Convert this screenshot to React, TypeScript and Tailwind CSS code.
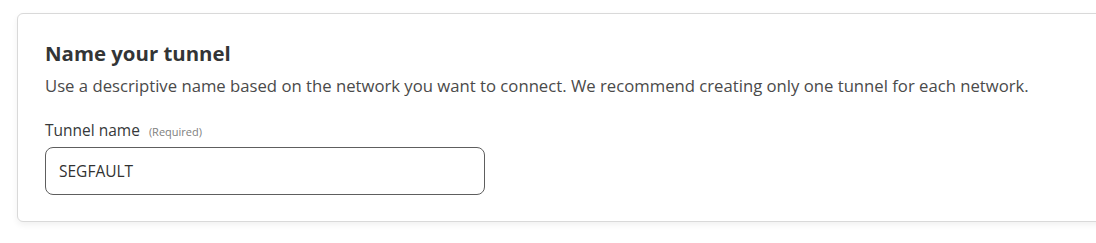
import React from "react";

const App: React.FC = () => {
  return (
    <div className="min-h-[243px] bg-white pt-[13px] pl-[17px] font-['Open_Sans',sans-serif] overflow-hidden">
      <div className="w-[1100px] rounded-[6px] border border-[#d9d9d9] bg-white px-[27px] pt-[26px] pb-[26px] shadow-[0_3px_6px_rgba(0,0,0,0.06)]">
        <h2 className="text-[20.4px] font-bold leading-[26px] text-[#333536]">
          Name your tunnel
        </h2>
        <p className="mt-[8px] text-[16.7px] leading-[24px] text-[#4a4a4a]">
          Use a descriptive name based on the network you want to connect. We
          recommend creating only one tunnel for each network.
        </p>
        <label className="mt-[21px] flex items-baseline gap-[9px]">
          <span className="text-[15.5px] leading-[22px] text-[#36393a]">
            Tunnel name
          </span>
          <span className="text-[11px] text-[#808080]">(Required)</span>
        </label>
        <input
          readOnly
          value="SEGFAULT"
          className="mt-[6px] block h-[48px] w-[440px] rounded-[8px] border border-[#5e5e5e] px-[13px] text-[15.5px] text-[#313131] outline-none"
        />
      </div>
    </div>
  );
};

export default App;
